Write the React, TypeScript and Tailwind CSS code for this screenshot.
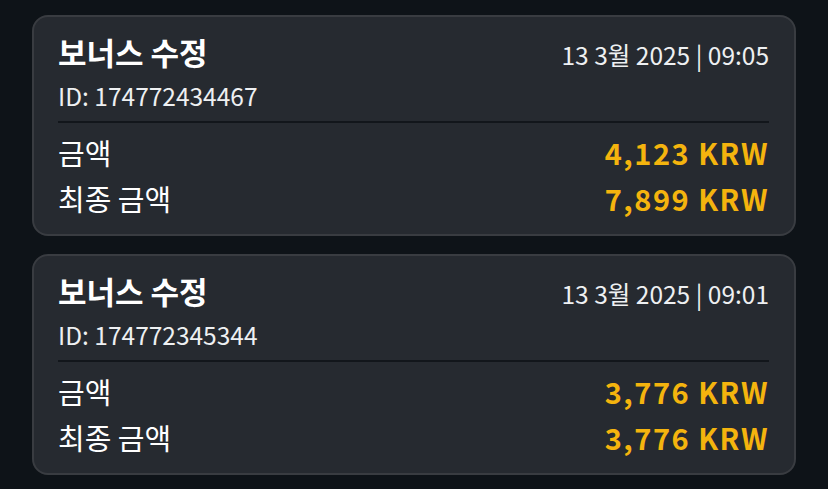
import React from "react";

type Record = {
  id: string;
  title: string;
  date: string;
  amount: string;
  finalAmount: string;
};

const records: Record[] = [
  { id: "174772434467", title: "보너스 수정", date: "13 3월 2025 | 09:05", amount: "4,123 KRW", finalAmount: "7,899 KRW" },
  { id: "174772345344", title: "보너스 수정", date: "13 3월 2025 | 09:01", amount: "3,776 KRW", finalAmount: "3,776 KRW" },
];

const font = { fontFamily: '"Noto Sans CJK KR", "Noto Sans", sans-serif' };

export default function App() {
  return (
    <div className="min-h-[489px] w-[828px] bg-[#0e1318] px-[32px] pt-[15px] pb-4 flex flex-col gap-[18px]" style={font}>
      {records.map((r) => (
        <div
          key={r.id}
          className="bg-[#262a30] border-2 border-[#393c41] rounded-[16px] pl-[24px] pr-[25px] pt-[15px] pb-[12px] text-white"
        >
          <div className="flex justify-between items-baseline h-[40px]">
            <h3 className="text-[31px] font-bold leading-[40px]">{r.title}</h3>
            <span className="text-[24.5px] leading-[40px] text-[#eef0f2]">{r.date}</span>
          </div>
          <p className="text-[24.5px] leading-[34px] mt-[7px] text-[#eef0f2]">ID: {r.id}</p>
          <div className="h-[2px] bg-[#12161b] mt-[8px] mb-[6px]" />
          <div className="flex justify-between items-center h-[47px]">
            <span className="text-[29px]">금액</span>
            <span className="text-[29px] font-bold text-[#f4b40e] tracking-[1.5px]">{r.amount}</span>
          </div>
          <div className="flex justify-between items-center h-[46px]">
            <span className="text-[29px]">최종 금액</span>
            <span className="text-[29px] font-bold text-[#f4b40e] tracking-[1.5px]">{r.finalAmount}</span>
          </div>
        </div>
      ))}
    </div>
  );
}
